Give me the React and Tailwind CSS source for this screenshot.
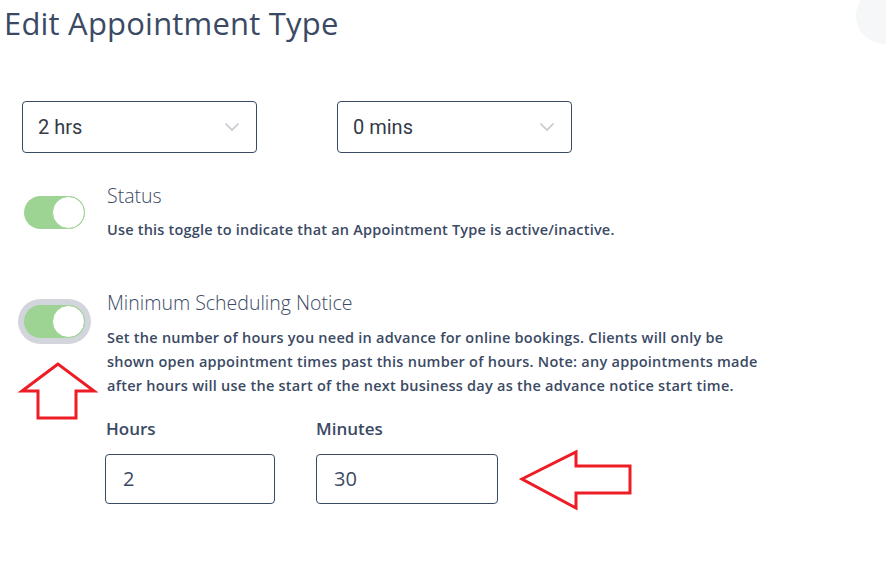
import React from "react";

function Chevron() {
  return (
    <svg width="16" height="10" viewBox="0 0 16 10" fill="none">
      <path d="M1.5 1.5 L8 8 L14.5 1.5" stroke="#c4c8cf" strokeWidth="1.6" />
    </svg>
  );
}

function Select({ label }) {
  return (
    <div className="flex h-[52px] w-[235px] items-center justify-between rounded-[4px] border border-[#3b4a64] bg-white pl-[15px] pr-[16px]">
      <span className="text-[20px] text-[#333b47]" style={{ fontFamily: "Roboto, sans-serif" }}>{label}</span>
      <Chevron />
    </div>
  );
}

function Toggle({ focused }) {
  return (
    <div className={focused ? "inline-flex rounded-full bg-[#d2d5dc] p-[6px]" : "inline-flex"}>
      <div className="flex h-[33px] w-[61px] items-center justify-end rounded-full bg-[#9dd393]">
        <div className="h-[33px] w-[33px] rounded-full border-[1.5px] border-[#9dd393] bg-white" />
      </div>
    </div>
  );
}

export default function App() {
  const font = { fontFamily: "'Open Sans', 'Noto Sans', sans-serif" };
  return (
    <div className="relative h-[573px] w-[886px] overflow-hidden bg-white text-[#3b4a64]" style={font}>
      <div className="absolute right-[-26px] top-[-12px] h-[56px] w-[56px] rounded-full bg-[#f6f7f9]" />
      <h1 className="pl-[4px] pt-[3px] text-[31px] leading-[40px] font-medium tracking-[0.2px] text-[#3b4a64]">Edit Appointment Type</h1>

      <div className="mt-[58px] flex gap-[80px] pl-[22px]">
        <Select label="2 hrs" />
        <Select label="0 mins" />
      </div>

      <div className="mt-[30px] flex">
        <div className="w-[107px] pl-[24px] pt-[13px]">
          <Toggle />
        </div>
        <div>
          <div className="text-[19.5px] leading-[26px] font-light">Status</div>
          <div className="mt-[9px] text-[14.5px] leading-[24px] font-semibold tracking-[0.2px]">Use this toggle to indicate that an Appointment Type is active/inactive.</div>
        </div>
      </div>

      <div className="mt-[48px] flex">
        <div className="w-[107px] pl-[18px] pt-[9px]">
          <Toggle focused />
        </div>
        <div>
          <div className="text-[19.5px] leading-[26px] font-light">Minimum Scheduling Notice</div>
          <div className="mt-[10px] w-[652px] text-[14.5px] leading-[24px] font-semibold tracking-[0.25px]">
            Set the number of hours you need in advance for online bookings. Clients will only be shown open appointment times past this number of hours. Note: any appointments made after hours will use the start of the next business day as the advance notice start time.
          </div>
          <div className="mt-[19px] flex gap-[41px] ml-[-2px]">
            <div>
              <div className="pl-[1px] text-[17px] leading-[24px] font-semibold">Hours</div>
              <div className="mt-[13px] flex h-[50px] w-[170px] items-center rounded-[4px] border border-[#3b4a64] pl-[17px] text-[20px] text-[#3b4a64]">2</div>
            </div>
            <div>
              <div className="text-[17px] leading-[24px] font-semibold">Minutes</div>
              <div className="mt-[13px] flex h-[50px] w-[182px] items-center rounded-[4px] border border-[#3b4a64] pl-[17px] text-[20px] text-[#3b4a64]">30</div>
            </div>
          </div>
        </div>
      </div>

      <svg className="absolute left-0 top-0" width="886" height="573" viewBox="0 0 886 573" fill="none">
        <path d="M58 364 L22 391 L38 391 L38 418 L76 418 L76 391 L94 391 Z" stroke="#ee1c25" strokeWidth="3" strokeLinejoin="miter" />
        <path d="M522 479 L576 452 L576 466 L630 466 L630 493 L576 493 L576 508 Z" stroke="#ee1c25" strokeWidth="3" strokeLinejoin="miter" />
      </svg>
    </div>
  );
}
